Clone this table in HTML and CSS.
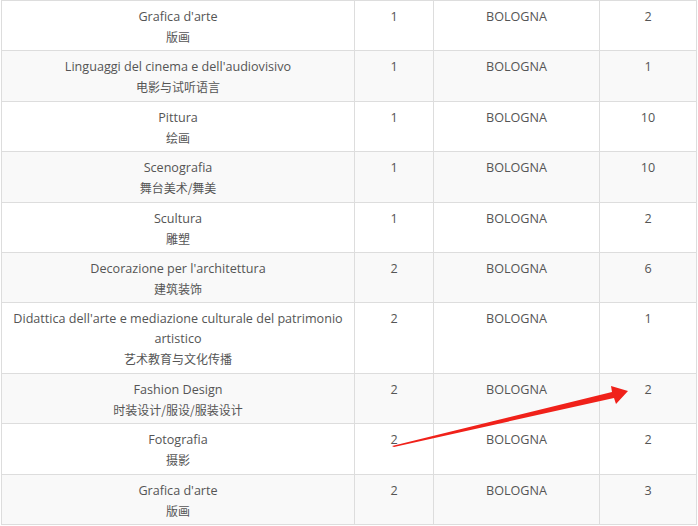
FILE: index.html
```html
<!DOCTYPE html>
<html>
<head>
<meta charset="utf-8">
<link rel="stylesheet" href="styles.css">
</head>
<body>
<div class="wrap">
<table class="grid">
<colgroup><col class="c1"><col class="c2"><col class="c3"><col class="c4"></colgroup>
<tbody>
<tr><td>Grafica d'arte<span class="zh">版画</span></td><td>1</td><td>BOLOGNA</td><td>2</td></tr>
<tr><td>Linguaggi del cinema e dell'audiovisivo<span class="zh">电影与试听语言</span></td><td>1</td><td>BOLOGNA</td><td>1</td></tr>
<tr><td>Pittura<span class="zh">绘画</span></td><td>1</td><td>BOLOGNA</td><td>10</td></tr>
<tr><td>Scenografia<span class="zh">舞台美术/舞美</span></td><td>1</td><td>BOLOGNA</td><td>10</td></tr>
<tr><td>Scultura<span class="zh">雕塑</span></td><td>1</td><td>BOLOGNA</td><td>2</td></tr>
<tr><td>Decorazione per l'architettura<span class="zh">建筑装饰</span></td><td>2</td><td>BOLOGNA</td><td>6</td></tr>
<tr><td>Didattica dell'arte e mediazione culturale del patrimonio artistico<span class="zh">艺术教育与文化传播</span></td><td>2</td><td>BOLOGNA</td><td>1</td></tr>
<tr><td>Fashion Design<span class="zh">时装设计/服设/服装设计</span></td><td>2</td><td>BOLOGNA</td><td>2</td></tr>
<tr><td>Fotografia<span class="zh">摄影</span></td><td>2</td><td>BOLOGNA</td><td>2</td></tr>
<tr><td>Grafica d'arte<span class="zh">版画</span></td><td>2</td><td>BOLOGNA</td><td>3</td></tr>
</tbody>
</table>
<svg class="arrow" width="698" height="526" viewBox="0 0 698 526">
<polygon points="392,446 612,392 611,386 628,391 616,404 614,398 394,447" fill="#f0211a"/>
</svg>
</div>
</body>
</html>
```
FILE: styles.css
```css
html, body {
  margin: 0;
  padding: 0;
  background: #fff;
}
.wrap {
  position: relative;
  width: 698px;
  height: 526px;
  overflow: hidden;
}
.grid {
  margin-left: 1px;
  width: 696px;
  table-layout: fixed;
  border-collapse: collapse;
  font-family: "Open Sans", "Noto Sans CJK SC", sans-serif;
  font-size: 12.6px;
  line-height: 20px;
  color: #555;
}
.c1 { width: 353px; }
.c2 { width: 79px; }
.c3 { width: 166px; }
.c4 { width: 97px; }
.grid td {
  border: 1px solid #ddd;
  padding: 6px 6px 3.4px;
  text-align: center;
  vertical-align: top;
}
.grid tr:nth-child(even) td {
  background: #f9f9f9;
}
.zh {
  display: block;
  font-family: "Noto Sans CJK SC", sans-serif;
  font-size: 12px;
  line-height: 20px;
}
.arrow {
  position: absolute;
  left: 0;
  top: 0;
  pointer-events: none;
}
```
